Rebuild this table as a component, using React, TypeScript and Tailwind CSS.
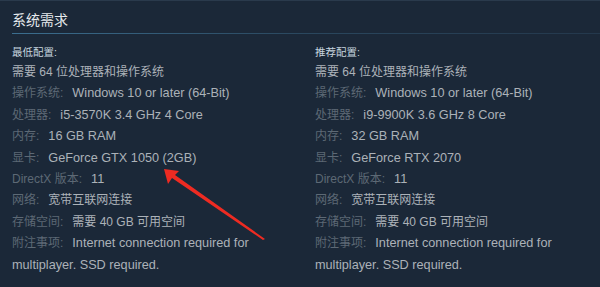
const min = [
  { label: '操作系统:', value: 'Windows 10 or later (64-Bit)' },
  { label: '处理器:', value: 'i5-3570K 3.4 GHz 4 Core' },
  { label: '内存:', value: '16 GB RAM' },
  { label: '显卡:', value: 'GeForce GTX 1050 (2GB)' },
  { label: 'DirectX 版本:', value: '11' },
  { label: '网络:', value: '宽带互联网连接', cjk: true },
  { label: '存储空间:', value: '需要 40 GB 可用空间', cjk: true },
  { label: '附注事项:', value: 'Internet connection required for multiplayer. SSD required.' },
];

const rec = [
  { label: '操作系统:', value: 'Windows 10 or later (64-Bit)' },
  { label: '处理器:', value: 'i9-9900K 3.6 GHz 8 Core' },
  { label: '内存:', value: '32 GB RAM' },
  { label: '显卡:', value: 'GeForce RTX 2070' },
  { label: 'DirectX 版本:', value: '11' },
  { label: '网络:', value: '宽带互联网连接', cjk: true },
  { label: '存储空间:', value: '需要 40 GB 可用空间', cjk: true },
  { label: '附注事项:', value: 'Internet connection required for multiplayer. SSD required.' },
];

type Row = { label: string; value: string; cjk?: boolean };

const Column = ({ title, rows }: { title: string; rows: Row[] }) => (
  <div>
    <div className="text-[10.5px] leading-[15px] text-[#c6d4df] mb-[2px]">{title}</div>
    <ul className="text-[12px] leading-[21.4px] text-[#acb2b8]">
      <li>需要 64 位处理器和操作系统</li>
      {rows.map(r => (
        <li key={r.label}>
          <span className="text-[#5d6975] mr-[9px]">{r.label}</span>
          <span className={r.cjk ? 'text-[12px]' : 'text-[12.7px]'}>{r.value}</span>
        </li>
      ))}
    </ul>
  </div>
);

export default function App() {
  return (
    <div
      className="relative w-[600px] h-[287px] bg-[#1b2838] border-t border-[#2a3a4c] overflow-hidden"
      style={{ fontFamily: '"Liberation Sans", "Noto Sans CJK SC", sans-serif' }}
    >
      <div className="pl-3">
        <h2 className="pt-[11px] pb-[5px] text-[14px] leading-[16px] text-[#e5e9ec] font-normal">系统需求</h2>
        <div className="h-px bg-gradient-to-r from-[#3b6e8f] via-[#2a475e] to-[#24384c]" />
      </div>
      <div className="grid grid-cols-2 gap-[30px] px-3 pt-[11px]">
        <Column title="最低配置:" rows={min} />
        <Column title="推荐配置:" rows={rec} />
      </div>

      <svg className="absolute left-0 top-0 pointer-events-none" width="600" height="287">
        <polygon points="164,168 179,170 175,174 265,238 263,239 172,177 168,183" fill="#ee2b22" />
      </svg>
    </div>
  );
}
